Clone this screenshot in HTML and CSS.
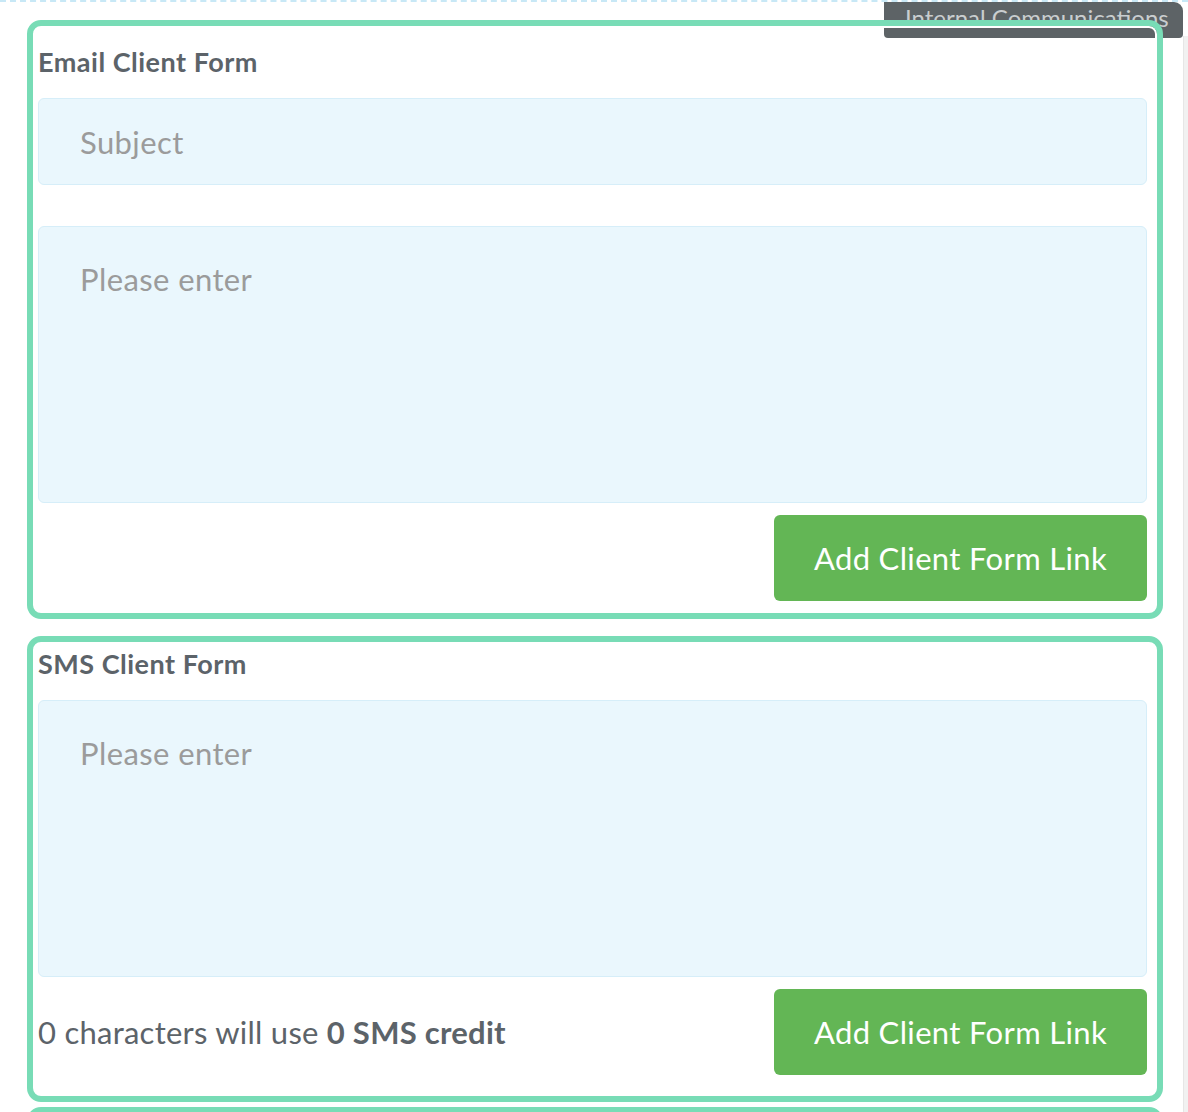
FILE: index.html
```html
<!DOCTYPE html>
<html lang="en">
<head>
<meta charset="utf-8">
<title>Client Forms</title>
<link rel="stylesheet" href="styles.css">
</head>
<body>
<div class="page">
  <div class="tab">Internal Communications</div>
  <div class="scrollbar"></div>

  <section class="card card--email">
    <h2 class="card-title">Email Client Form</h2>
    <input class="field field--subject" type="text" placeholder="Subject">
    <textarea class="field field--body" placeholder="Please enter"></textarea>
    <div class="card-footer">
      <button class="btn" type="button">Add Client Form Link</button>
    </div>
  </section>

  <section class="card card--sms">
    <h2 class="card-title">SMS Client Form</h2>
    <textarea class="field field--body" placeholder="Please enter"></textarea>
    <div class="card-footer card-footer--split">
      <p class="sms-count">0 characters will use <strong>0 SMS credit</strong></p>
      <button class="btn" type="button">Add Client Form Link</button>
    </div>
  </section>

  <section class="card card--next"></section>
</div>
</body>
</html>
```
FILE: styles.css
```css
* { box-sizing: border-box; }

html, body {
  margin: 0;
  padding: 0;
  background: #ffffff;
  height: 1112px;
  overflow: hidden;
}

body {
  font-family: Lato, "Open Sans", "Liberation Sans", sans-serif;
  color: #5c6369;
}

.page {
  position: relative;
  border-top: 2px dashed #c8e8f6;
  padding-top: 18px;
  display: flex;
  flex-direction: column;
}

.tab {
  position: absolute;
  top: 0;
  left: 884px;
  width: 299px;
  height: 36px;
  background: #5d6366;
  color: #c9cdcf;
  border-radius: 0 9px 4px 4px;
  font-size: 24px;
  line-height: 24px;
  padding: 4px 0 0 21px;
  z-index: 1;
  white-space: nowrap;
  overflow: hidden;
}

.scrollbar {
  position: absolute;
  top: 34px;
  right: 0;
  width: 5px;
  height: 1100px;
  background: #f1f1f1;
  border-left: 1px solid #e6e6e6;
}

.card {
  position: relative;
  margin-left: 27px;
  width: 1136px;
  background: #ffffff;
  border-radius: 14px;
  padding: 5px 16px 18px 11px;
  display: flex;
  flex-direction: column;
}

.card::after {
  content: "";
  position: absolute;
  inset: 0;
  border: 6px solid #78dcb6;
  border-radius: 14px;
  box-shadow: inset 0 0 0 2px #ffffff;
  pointer-events: none;
  z-index: 2;
}

.card--sms {
  margin-top: 17px;
  padding-bottom: 27px;
}

.card--next {
  margin-top: 5px;
  height: 80px;
}

.card-title {
  margin: 5px 0 18px;
  font-size: 27px;
  line-height: 36px;
  font-weight: 700;
  color: #5c6369;
  letter-spacing: 0.5px;
}

.card--email .card-title {
  margin-top: 19px;
}

.field {
  display: block;
  width: 100%;
  background: #eaf7fd;
  border: 1px solid #d6eef9;
  border-radius: 6px;
  font-family: inherit;
  font-size: 31px;
  letter-spacing: 0.4px;
  color: #5c6369;
  padding: 0 41px;
  outline: none;
  margin: 0;
}

.field::placeholder {
  color: #9b9b9b;
  opacity: 1;
}

.field--subject {
  height: 87px;
  line-height: 36px;
  margin-bottom: 41px;
}

.field--body {
  height: 277px;
  resize: none;
  line-height: 36px;
  padding-top: 34px;
}

.card-footer {
  margin-top: 12px;
  display: flex;
  justify-content: flex-end;
  align-items: center;
}

.card-footer--split {
  justify-content: space-between;
}

.sms-count {
  margin: 0;
  font-size: 31px;
  line-height: 36px;
  color: #5c6369;
  letter-spacing: 0.25px;
}

.sms-count strong {
  font-weight: 700;
}

.btn {
  width: 373px;
  height: 86px;
  background: #63b655;
  border: none;
  border-radius: 6px;
  color: #ffffff;
  font-family: inherit;
  font-size: 31px;
  letter-spacing: 0.35px;
  line-height: 36px;
  padding: 0;
  cursor: pointer;
}
```
